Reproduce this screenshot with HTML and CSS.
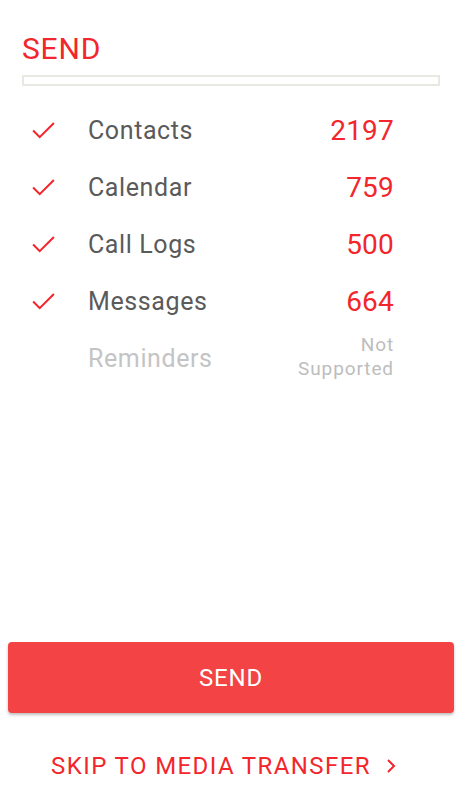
FILE: index.html
```html
<!DOCTYPE html>
<html lang="en">
<head>
  <meta charset="UTF-8" />
  <meta name="viewport" content="width=device-width, initial-scale=1.0"/>
  <title>Send</title>
  <link rel="stylesheet" href="styles.css">
</head>
<body>
  <div class="screen">
    <h1 class="title">SEND</h1>
    <div class="progress"></div>

    <ul class="items">
      <li class="item">
        <svg class="check" viewBox="0 0 24 18"><path d="M1 9 L8 16 L23 1" /></svg>
        <span class="label">Contacts</span>
        <span class="count">2197</span>
      </li>
      <li class="item">
        <svg class="check" viewBox="0 0 24 18"><path d="M1 9 L8 16 L23 1" /></svg>
        <span class="label">Calendar</span>
        <span class="count">759</span>
      </li>
      <li class="item">
        <svg class="check" viewBox="0 0 24 18"><path d="M1 9 L8 16 L23 1" /></svg>
        <span class="label">Call Logs</span>
        <span class="count">500</span>
      </li>
      <li class="item">
        <svg class="check" viewBox="0 0 24 18"><path d="M1 9 L8 16 L23 1" /></svg>
        <span class="label">Messages</span>
        <span class="count">664</span>
      </li>
      <li class="item disabled">
        <span class="check"></span>
        <span class="label">Reminders</span>
        <span class="count note">Not<br>Supported</span>
      </li>
    </ul>

    <div class="actions">
      <button class="send-btn" type="button">SEND</button>
      <a class="skip" href="#">SKIP TO MEDIA TRANSFER
        <svg class="chevron" viewBox="0 0 10 14"><path d="M2 1 L8 7 L2 13" /></svg>
      </a>
    </div>
  </div>
</body>
</html>
```

FILE: styles.css
```css
body {
  margin: 0;
  font-family: Roboto, 'Noto Sans', sans-serif;
  background: #fff;
}

.screen {
  display: flex;
  flex-direction: column;
  height: 800px;
}

.title {
  margin: 31px 0 0 22px;
  font-size: 30px;
  font-weight: 400;
  line-height: 36px;
  letter-spacing: 0.8px;
  color: #f2262c;
}

.progress {
  margin: 8px 28px 0 22px;
  height: 7px;
  border: 2px solid #e9e9e4;
}

.items {
  list-style: none;
  margin: 16px 0 0 0;
  padding: 0;
}

.item {
  display: flex;
  align-items: center;
  height: 57px;
  padding: 0 74px 0 32px;
}

.check {
  width: 23px;
  height: 17px;
  margin-right: 33px;
  flex-shrink: 0;
}

.check path {
  fill: none;
  stroke: #f2262c;
  stroke-width: 2.2;
}

.label {
  flex: 1;
  font-size: 25px;
  letter-spacing: 0.6px;
  color: #5a5a5a;
}

.count {
  font-size: 28px;
  letter-spacing: 0.2px;
  color: #f2262c;
  text-align: right;
}

.disabled .label {
  color: #c4c4c4;
}

.note {
  font-size: 19px;
  line-height: 24px;
  letter-spacing: 0.9px;
  color: #bdbdbd;
  margin-top: -4px;
}

.actions {
  margin-top: auto;
  display: flex;
  flex-direction: column;
  align-items: center;
}

.send-btn {
  width: 446px;
  height: 71px;
  margin: 0 14px 0 8px;
  align-self: flex-start;
  border: none;
  border-radius: 4px;
  background-color: #f44345;
  color: #fff;
  font-family: inherit;
  font-size: 24px;
  letter-spacing: 0.8px;
  box-shadow: 0 2px 3px rgba(0, 0, 0, 0.25);
  cursor: pointer;
}

.skip {
  display: flex;
  align-items: center;
  gap: 15px;
  margin: 38px 21px 19px 0;
  height: 30px;
  font-size: 24px;
  letter-spacing: 1.4px;
  color: #f2262c;
  text-decoration: none;
}

.chevron {
  width: 10px;
  height: 14px;
}

.chevron path {
  fill: none;
  stroke: #f2262c;
  stroke-width: 2;
}
```
